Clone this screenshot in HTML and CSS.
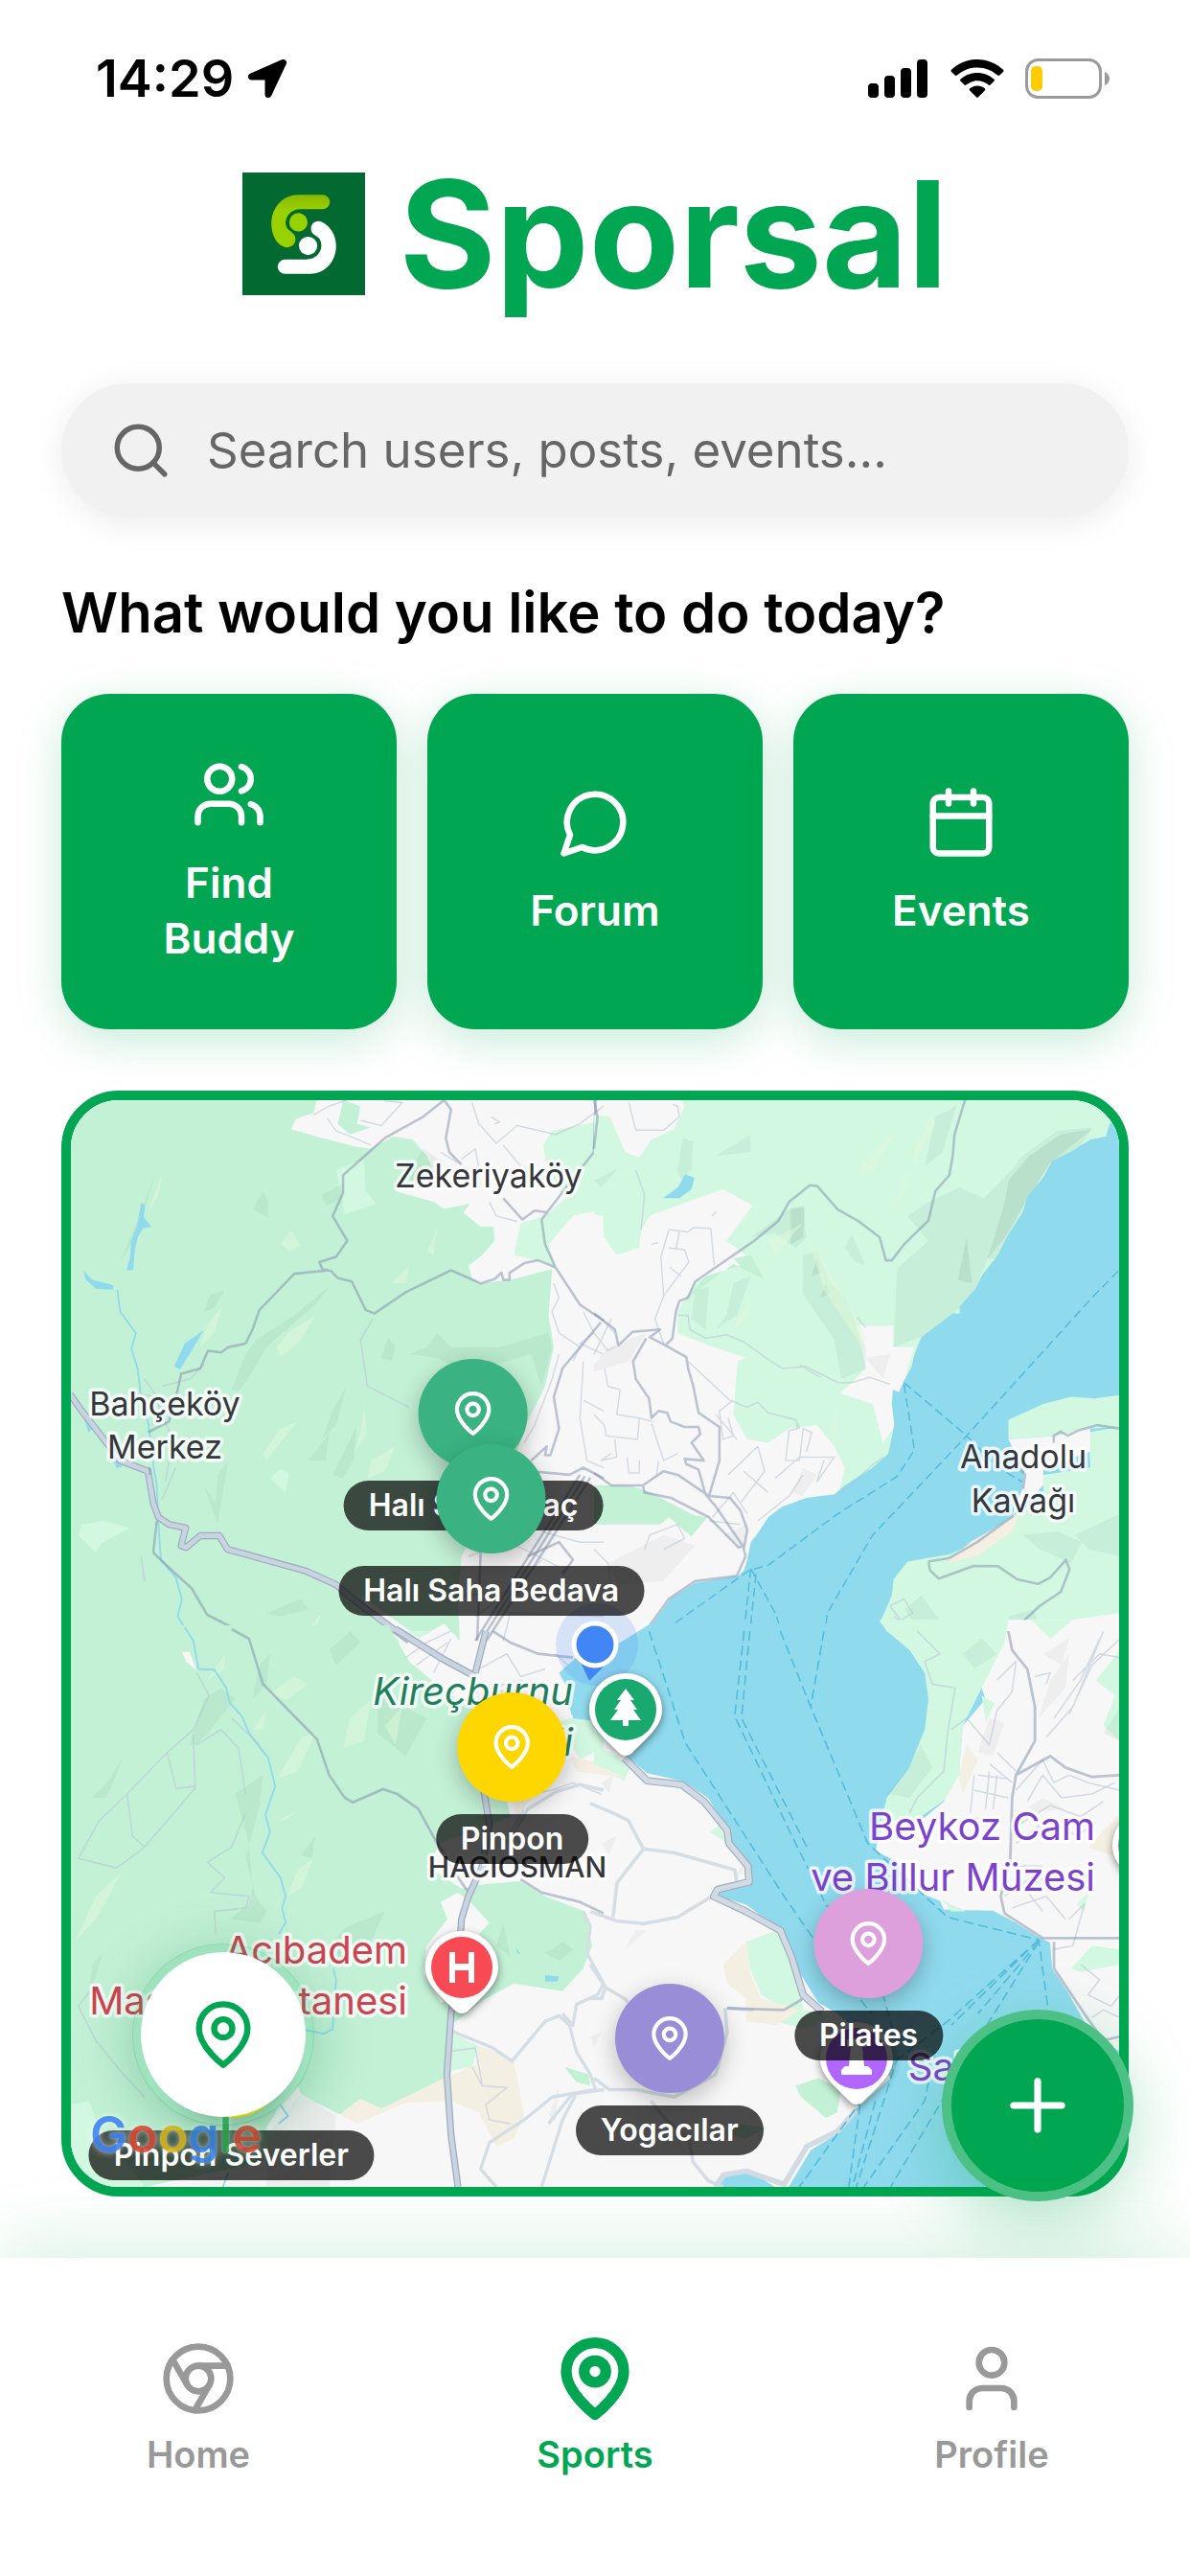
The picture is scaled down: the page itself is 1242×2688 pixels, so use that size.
FILE: index.html
```html
<!DOCTYPE html>
<html lang="en">
<head>
<meta charset="utf-8">
<meta name="viewport" content="width=device-width, initial-scale=1">
<title>Sporsal</title>
<link rel="stylesheet" href="styles.css">
</head>
<body>
<svg width="0" height="0" class="defs" aria-hidden="true">
  <symbol id="pin" viewBox="0 0 24 24"><path d="M20 10c0 6-8 12-8 12s-8-6-8-12a8 8 0 0 1 16 0Z"/><circle cx="12" cy="10" r="3"/></symbol>
</svg>

<div class="status">
  <div class="status-left">
    <span class="clock">14:29</span>
    <svg class="locate" viewBox="0 0 42 42" aria-hidden="true"><path d="M37.500 4.500 4.500 19H22V37.500Z" stroke="#000" stroke-width="7" stroke-linejoin="round"/></svg>
  </div>
  <div class="status-right">
    <svg class="signal" viewBox="0 0 64 40" aria-hidden="true"><rect x="0" y="25" width="11" height="15" rx="4"/><rect x="17" y="17" width="11" height="23" rx="4"/><rect x="34" y="9" width="11" height="31" rx="4"/><rect x="51" y="0" width="11" height="40" rx="4"/></svg>
    <svg class="wifi" viewBox="0 0 56 40" aria-hidden="true"><path d="M28 0C17.500 0 8 4.200 1 10.800c-.7.700-.7 1.500 0 2.200l3.700 3.600c.6.600 1.400.6 2.100 0C12.500 11.500 19.900 8.400 28 8.400s15.500 3.100 21.200 8.200c.7.600 1.500.6 2.100 0L55 13c.7-.7.7-1.500 0-2.200C48 4.200 38.500 0 28 0Zm0 14c-6.600 0-12.700 2.500-17.300 6.600-.8.700-.7 1.500-.1 2.200l3.800 3.700c.6.600 1.300.6 2 .1 3.100-2.700 7.200-4.300 11.600-4.300s8.500 1.600 11.600 4.300c.7.500 1.400.5 2-.1l3.800-3.700c.6-.7.7-1.500-.1-2.200C40.700 16.500 34.600 14 28 14Zm0 13.500c-2.900 0-5.600 1-7.700 2.800-.8.700-.7 1.500-.1 2.100l6.700 6.900c.7.700 1.500.7 2.200 0l6.700-6.900c.6-.6.700-1.400-.1-2.100-2.100-1.800-4.800-2.800-7.700-2.800Z"/></svg>
    <svg class="battery" viewBox="0 0 88 42" aria-hidden="true"><rect x="1.500" y="1.500" width="77" height="39" rx="12" fill="none" stroke="#9b9b9b" stroke-width="3"/><path d="M83 14v14c3-1 5-4 5-7s-2-6-5-7Z" fill="#9b9b9b"/><rect x="6" y="8" width="12" height="26" rx="5" fill="#fc0"/></svg>
  </div>
</div>

<main class="content">
  <header class="brand">
    <svg class="logo" viewBox="0 0 127 127" role="img" aria-label="Sporsal logo">
      <defs><linearGradient id="lime" x1="0" y1="0" x2="0" y2="1"><stop offset="0" stop-color="#8ab800"/><stop offset=".3" stop-color="#99d100"/></linearGradient></defs>
      <rect width="127" height="127" fill="#026a30"/>
      <path d="M58 23h25a7.500 7.500 0 0 1 0 15H60C48 38 42 50 46 57c2 4 9 5 9 12 0 6-6 10-12 8C35 74 30 64 30 53 30 36 42 23 58 23Z" fill="url(#lime)"/>
      <circle cx="58" cy="51.500" r="9.500" fill="#99d100"/>
      <path d="M70 105H44a7.500 7.500 0 0 1 0-15h22c13 0 19-12 14-21-2-4-9-4-9-11 0-6 6-9 11-7 9 4 15 14 15 25 0 17-12 29-27 29Z" fill="#fff"/>
      <circle cx="68" cy="76" r="9.500" fill="#fff"/>
    </svg>
    <h1 class="title">Sporsal</h1>
  </header>

  <label class="search">
    <svg class="search-icon" viewBox="0 0 24 24" aria-hidden="true"><circle cx="11" cy="11" r="8"/><path d="m21 21-4.300-4.300"/></svg>
    <input class="search-input" type="search" placeholder="Search users, posts, events..." aria-label="Search">
  </label>

  <h2 class="question">What would you like to do today?</h2>

  <div class="actions">
    <button class="action" type="button">
      <svg class="action-icon" viewBox="0 0 24 24" aria-hidden="true"><path d="M16 21v-2a4 4 0 0 0-4-4H6a4 4 0 0 0-4 4v2"/><circle cx="9" cy="7" r="4"/><path d="M22 21v-2a4 4 0 0 0-3-3.870M16 3.130a4 4 0 0 1 0 7.750"/></svg>
      <span>Find<br>Buddy</span>
    </button>
    <button class="action" type="button">
      <svg class="action-icon" viewBox="0 0 24 24" aria-hidden="true"><path d="M7.900 20A9 9 0 1 0 4 16.100L2 22Z"/></svg>
      <span>Forum</span>
    </button>
    <button class="action" type="button">
      <svg class="action-icon" viewBox="0 0 24 24" aria-hidden="true"><rect x="3" y="4" width="18" height="18" rx="2"/><path d="M16 2v4M8 2v4M3 10h18"/></svg>
      <span>Events</span>
    </button>
  </div>

  <section class="map-area" aria-label="Map">
    <div class="map">
      <svg class="terrain" viewBox="0 0 1094 1134" preserveAspectRatio="xMidYMid slice">
        <rect width="1094" height="1134" fill="#f7f7f7"/>

        <!-- north-west: Belgrad forest -->
        <g transform="translate(-14 -16) scale(.3635 .3699)">
          <path class="forest" d="M36 43H745L735 80 685 95 670 125 760 150 860 175 900 180 965 145 1020 155 1060 200 1080 240 970 300 1080 330 1110 350 1185 335 1165 360 1215 400H1252L1255 440 1220 480 1180 510 1190 545 1215 560 1300 550 1420 520 1410 650 1425 740 1400 850 1350 950 1310 1060 1160 1330 1150 1450 1155 1568 1110 1520 1040 1560 870 1440 900 1490 980 1568V1600H320L290 1530 315 1450 290 1400 240 1370 215 1300 220 1240 210 1190 235 1110 170 1060 140 1000 170 870 190 790 220 780 290 840 370 800 450 780 420 850 430 930 400 1000 460 1050 370 1080 330 1140 300 1180 290 1240 300 1400 330 1500 330 1600H36Z"/>
          <path class="forest" d="M820 43 870 60 860 110 900 120 840 140 805 110Z"/>
          <path class="meadow" d="M1568 100 1420 130 1395 170 1405 240 1460 320 1400 370 1330 390 1310 480 1400 500 1430 520 1410 450 1480 370 1568 350Z"/>
          <path class="meadow" d="M800 240 880 210 885 300 915 335 825 365ZM70 1240 130 1230 210 1250 130 1290 110 1320 60 1270ZM610 1110 640 1085 665 1095 655 1150Z"/>
          <path class="shade" d="M500 860 540 760 570 720 680 650 780 570 740 620 600 740 560 810 520 865ZM560 350 590 300 605 330 605 375ZM760 310 820 280 820 320 770 340ZM420 640 440 590 480 580 450 630ZM760 1000 790 920 830 850 800 960ZM790 1100 820 1040 860 960 870 860 850 1060 820 1110ZM930 770 950 710 970 740 960 780ZM1010 760 1060 740 1090 700 1130 740 1270 740 1340 720 1410 700 1420 740 1390 850 1360 760 1220 800 1130 790 1090 770ZM420 1130 455 1180 460 1100 490 1060 460 1240ZM600 1490 700 1450 720 1480 640 1500ZM240 360 280 250 265 300 230 420 180 500ZM720 1060 760 1010 780 980 770 1060ZM1050 180 1110 220 1060 290 1000 260Z"/>
          <path class="glow" d="M630 740 660 700 740 650 700 720 640 770ZM260 360 300 250 290 310ZM410 740 430 680 475 620 450 700ZM640 450 670 410 700 455 665 470ZM590 1040 640 970 690 950 640 1010 600 1060ZM900 1060 970 1020 940 1090 890 1110ZM1060 470 1080 430 1090 400 1080 480ZM960 560 1010 510 1000 560ZM880 910 870 980 850 1040 890 980ZM700 1550 760 1490 730 1560Z"/>
          <path class="lake" d="M240 333 252 340 248 375 270 400 245 405 230 430 222 470 217 523H198L208 490 212 440 228 400ZM75 525 100 550 160 565 160 578 110 575 80 548ZM335 795 365 730 420 692 385 750 352 802ZM75 938 102 965 90 982ZM160 1058 188 1075 170 1082Z"/>
          <path class="stream" d="M172 578 180 640 225 700 212 745 230 800 240 880 262 960 275 1070 285 1130 290 1240 297 1340 340 1390 357 1450 345 1500 390 1568"/>
          <path class="lane" d="M735 85 780 60 830 43M775 95 800 130 840 145 900 170M870 100 930 115 990 50 940 45M1190 50 1210 110 1260 165 1320 115 1430 140 1500 110 1568 60M1160 210 1200 180 1210 240M1100 190 1150 220M1280 170 1330 230M1240 330 1260 370 1320 385M1245 90 1270 105 1255 110M1425 560 1440 600 1420 640 1440 700 1500 740 1480 780M1510 640 1540 700 1500 730 1568 760M1440 760 1420 830 1370 960 1340 1010M1510 890 1568 920M1510 780 1500 940 1520 1060 1568 1080M250 830 300 900 270 960M300 850 380 830 420 790M220 870 280 880 330 1000 310 1120M240 1330 250 1400M340 1080 300 1170M1180 1330 1290 1290 1340 1310 1440 1360M1200 1500 1310 1420 1390 1340M1300 1450 1400 1440 1568 1420M1280 1568 1300 1490 1568 1500M905 660 870 720 890 850 1010 910M1170 1440 1290 1430M1390 1260 1500 1290 1568 1290"/>
          <path class="road" d="M1110 43 1050 90 940 150 820 255V305L790 370 832 440 800 485 752 500 760 520 785 525 805 545 845 555 885 635 910 645 1000 585 1130 523 1215 560 1255 548 1275 530 1280 550H1298V530L1340 503 1380 495 1430 515 1500 620 1568 665M780 523 680 533 580 635 560 690 540 730 490 740 470 755 432 750 410 800 355 815 345 860M1110 43 1130 70 1115 150 1125 190 1160 225M1545 43 1540 190 1460 290 1390 380 1400 450 1430 515M1280 320 1335 380 1370 355 1410 360M1560 670 1450 800 1425 880 1440 970 1415 1045 1400 1045 1405 1020 1360 1060M345 860 320 950 260 980M1360 1090 1470 1100 1510 1080 1568 1110M1215 1320 1205 1568M1350 1330 1440 1290 1480 1340 1450 1380M275 1320 340 1380 385 1420 430 1495 530 1545 560 1590"/>
          <path class="casing" d="M36 873 70 920 180 1060 260 1090 275 1180 290 1220 320 1240 368 1250 355 1300 370 1305 410 1272 465 1272 488 1310 715 1372 800 1410 860 1460 1010 1568"/>
          <path class="highway" d="M36 873 70 920 180 1060 260 1090 275 1180 290 1220 320 1240 368 1250 355 1300 370 1305 410 1272 465 1272 488 1310 715 1372 800 1410 860 1460 1010 1568"/>
          <path class="road" d="M265 1080V1100M285 1230 275 1320M1500 1100 1200 1568M1514 1104 1216 1568M1530 1108 1232 1568"/>
        </g>

        <!-- north-east: shore and strait -->
        <g transform="translate(546 -16) scale(.3635 .3699)">
          <path class="meadow" d="M0 85 45 90 90 190 130 205 165 155 230 125 260 60 250 43H1510V1000L700 1160 720 1080 690 1020 640 960 560 970 500 1010 440 1000 400 930 412 780 435 770 330 735 240 700 240 640 290 555 420 510 445 455 490 520 380 440 455 340 370 295 270 330 160 370 135 410 130 460 65 480 28 430 25 370 0 365Z"/>
          <path class="forest" d="M0 1130 100 1130 150 1145 200 1170 290 1215 325 1220 280 1275 215 1220 190 1240 0 1240ZM270 600 320 540 420 510 400 490 450 480 490 550 400 505Z"/>
          <path class="land" d="M755 680H858L860 740H920L880 870 860 860 865 960 830 1010 800 900 705 870 740 840 780 800Z"/>
          <path class="shade" d="M240 240 255 150 285 160 280 240 250 270ZM450 430 560 350 600 340 610 430 580 460 520 420ZM600 480 640 470 680 560 720 600 780 740 780 800 710 830 690 720 600 590ZM860 740 870 520 960 440 900 370 960 330 1050 290 1120 320 1200 240 1230 200 1330 130 1430 120 1400 170 1310 220 1240 330 1160 490 1130 490 1090 590 1050 630 940 710ZM290 580 330 570 320 690 280 660ZM380 650 400 560 450 540 410 650 350 690ZM980 90 1040 60 1000 190 950 230ZM720 460 740 420 780 510 750 500ZM350 200 450 140 450 190ZM0 270 70 235 20 290Z"/>
          <path class="dark-shade" d="M1130 490 1180 330 1190 270 1250 200 1340 140 1430 125 1310 220 1240 330 1180 430ZM565 350 605 345 600 430 565 450ZM625 540 640 490 650 530ZM1045 550 1070 430 1085 560ZM650 600 665 560 675 590Z"/>
          <path class="glow" d="M620 450 660 500 780 710 770 740 660 580ZM750 250 830 160 870 130 800 250ZM920 180 970 80 980 110 920 220ZM860 340 900 230 890 310ZM500 440 600 390 520 480ZM390 700 460 590 440 650ZM670 1000 700 900 700 980Z"/>
          <path class="hill" d="M0 790 40 740 150 700 100 780 0 810ZM40 1350 200 1270 290 1300 200 1400 70 1410ZM570 1150 600 1080 640 1100 600 1160ZM780 770 850 760 830 830ZM370 1270 440 1240 430 1310Z"/>
          <path class="sea" d="M1510 85 1480 110 1470 145 1425 155 1375 185 1315 215 1290 260 1245 315 1230 360 1185 430 1160 480 1115 535 1095 575 1050 625V645L1030 645 940 712 920 760 912 795 890 835 875 867 858 860 855 900 862 960 845 1040 800 1080 720 1130 690 1155 610 1165 540 1190 500 1220 470 1265 450 1290 440 1340 430 1370 415 1385 290 1405 220 1450 160 1530 90 1568 80 1610H1520V80Z"/>
          <path class="lake" d="M198 320 240 290 262 253 288 262 280 295 245 320Z"/>
          <path class="meadow" d="M1510 875 1440 885 1370 880 1290 900 1190 945V1000L1320 990 1420 970 1510 965ZM1510 965 1420 980 1425 1080 1290 1100V1170L1200 1215 1100 1290 1020 1325 900 1345 860 1395 855 1440 820 1520 860 1568 880 1610H1520Z"/>
          <path class="land" d="M1190 1000 1325 990 1425 965V1035L1290 1080V1130L1200 1215 1230 1140 1235 1090ZM1370 1510 1510 1490V1610H1340Z"/>
          <path class="shade" d="M1230 1270 1330 1260 1400 1290 1370 1350 1280 1310ZM1380 1270 1510 1210V1330L1420 1310ZM890 1480 940 1440 1000 1520 930 1530ZM1190 1500 1260 1480 1300 1568H1190Z"/>
          <path class="sand" d="M1010 1350 1080 1290 1220 1210 1200 1260 1100 1330Z"/>
          <path class="lane" d="M100 50 120 128 200 128 245 90 240 60 225 55M120 240 145 310 135 410M215 408 270 415 285 403 335 405 345 510M215 408 192 485 200 595 245 535 272 500 260 465 215 460M235 465 245 415M218 515 250 540M200 595 175 660 200 730M165 450 185 445M340 370 350 358M0 700 40 750 60 740M0 760 50 660M10 650 60 700M30 800 40 850 75 860 65 930 130 940 170 950M0 930 30 960 35 990 125 1000 130 940M60 1000 65 1050 20 1060 50 1040M95 1050 100 1095H130V1060M165 955 200 1060 240 1040M270 780 390 890 440 910 470 895 500 925 580 945 585 970 560 975 550 1060 590 1060 600 970 625 980 610 1035M240 650 270 650 275 690 320 715 380 705 430 725 500 775 540 800 610 795 700 840 740 840 790 825 850 845M590 790 650 825M755 655 780 685M400 890 360 920 370 1000 400 990 385 940M350 930 410 1000M385 1100 470 1020 490 1090 420 1180M430 1090 500 1150M520 1110 590 1050 690 1050 640 1120 660 1060M470 1230 560 1160 600 1100M145 1310 160 1270 240 1240 260 1280 200 1310M340 1220 400 1150 440 1210M330 1230 420 1240M0 1310 40 1350 50 1430M850 1470 890 1450 915 1490 880 1510ZM860 1500 930 1540 1000 1560M700 1160 790 1080 830 1050M1460 1560 1510 1520M580 945 590 970M185 1060 180 1100"/>
          <path class="road" d="M1065 43 1035 140 1030 200 1020 255 980 300 960 383 890 450 855 495H838L820 430 760 385 700 352 640 285 620 283 560 330 530 383 460 440 290 555 270 600 245 610 235 640 225 715 205 735 265 768 270 800 285 850 300 925 360 965V1060L330 1160M205 735 160 712 190 690 110 697 70 735 60 690 0 645M150 715 112 780 120 830 158 885 165 940 185 920 210 925 220 950 260 965H300L305 985 280 1010 315 1060 260 1055 265 1070 300 1085 320 1155M0 1095 50 1130 140 1130 200 1090 240 1100 330 1160 390 1165 420 1200 440 1255 430 1310 435 1330 410 1385 290 1400 215 1450 160 1525M140 1130 145 1150 220 1165 330 1220 415 1305 430 1300M320 1155 350 1190 430 1305M0 43 10 90 0 180M960 1345 1020 1335 1100 1290 1205 1215M960 1345 965 1370 990 1393 1090 1357 1160 1358 1215 1395 1275 1408 1310 1390 1355 1340 1365 1368 1340 1430 1280 1470 1230 1515 1200 1528 1185 1568M1320 1010 1320 990 1340 978 1360 990 1390 975 1445 960 1510 970M1220 1080 1238 1100 1232 1140"/>
          <path class="ferry" d="M1505 525 1430 600 1070 990 800 1270 670 1490 660 1568M890 840 1070 990 1160 1080 1230 1120M890 845 920 1030 870 1105 700 1210 500 1355 445 1370 190 1548 160 1540M450 1365 428 1568M465 1380 445 1568M450 1365 520 1490 548 1568"/>
        </g>

        <!-- south-west -->
        <g transform="translate(-14 554) scale(.3635 .3954)">
          <path class="forest" d="M36-15H320L370 80 400 105 390 80 350-15H950L1010 80 1100 150 1200 210 1290 440 1300 490 1100 560 1060 620 1160 680 1200 670 1330 660 1400 700 1515 740 1535 830 1510 890 1450 950 1310 930 1230 970 1130 1040V1180L930 1260 870 1235 810 1275 700 1225 690 1200 640 1250 600 1310 590 1400 250 1467H36Z"/>
          <path class="land" d="M1060 830 1120 760 1100 715 1150 690 1190 720 1240 770 1210 800 1250 860 1200 960 1100 980 1050 900Z"/>
          <path class="meadow" d="M1130 1060 1210 1095 1190 1150 1130 1160ZM36 1250 90 1240 120 1310 250 1467H100L36 1380Z"/>
          <path class="meadow" d="M1440 240 1568 200V360L1540 320 1500 340ZM960 0H1070L1040 15Z"/>
          <path class="sand" d="M810 1275 870 1235 930 1260 1110 1180 1200 1145 1210 1095 1310 1130 1340 1280 1310 1340 1260 1360 1210 1270 1130 1240 1000 1245 860 1300ZM1470 330 1568 350V380L1490 370ZM1320 490 1300 440 1360 440Z"/>
          <path class="forest" d="M1455 1150 1525 1170 1530 1200 1490 1190Z"/>
          <path class="shade" d="M380 300 420 180 470 150 510 180 440 260 400 300ZM495 760 550 720 560 680 550 560 510 430 590 380 580 460 540 600 570 700 600 740 580 770ZM100 440 150 390 190 330 140 440ZM780 50 840 0 870 30 800 90ZM920 160 1060 230 1000 330 920 270ZM700 590 740 540 730 600ZM760 850 830 780 940 740 900 820 800 870ZM100 880 90 970 130 850ZM560 180 580 90 610 60 600 140ZM1260 830 1280 770 1300 860ZM1400 850 1450 820 1480 840 1440 870Z"/>
          <path class="glow" d="M600 170 680 120 720 140 660 180ZM630 390 700 280 740 270 690 370ZM820 310 840 230 900 180 880 290ZM50 820 110 700 190 630 110 760ZM660 700 690 630 735 600 700 680ZM650 500 700 470 630 500ZM560 260 600 210 590 260ZM430 130 480 60 480 100ZM940 250 990 200 970 300Z"/>
          <path class="hill" d="M1410 1280 1440 1200 1430 1290ZM1530 1070 1560 1060 1540 1100ZM600 1330 700 1220 800 1280 780 1467H600Z"/>
          <path class="sea" d="M1568 50 1490 70 1440 110 1470 160 1480 230 1568 240Z"/>
          <path class="lake" d="M1400 908 1440 912 1435 925H1400ZM1315 835 1330 852 1320 850Z"/>
          <path class="stream" d="M365-10 390 25 405 100 450 102 485 150 495 190 530 225 550 270 605 335 625 410 597 485 610 530 588 585 640 650 655 700 645 730 655 770 635 800M792 890 800 920 790 1050 765 1063 700 1050M640 1250 662 1280 635 1300M490 1430 475 1467"/>
          <path class="lane" d="M400 110 435 170 390 260 315 320 200 430 120 500 60 600 170 625 250 570 395 415 390 270M200 430 215 540 250 570M315 320 340 415 395 410M400 300 470 260 520 310 540 430M500 230 580 300M540 480 500 570 430 610 480 650 440 690 550 700 540 730 450 740 455 800M110 930 60 990 110 1080 180 1160 250 1230M1000 70 1060 30 1130 0M1030 90 1120 30M1080 110 1130 20M1210 100 1290 60 1330 120 1400 100M1360 180 1240 150 1330 130 1440 180M1430 60 1500 120M1360 430 1420 420 1480 400 1560 430M1120 1110 1200 1100 1220 1200 1290 1205 1230 1250 1240 1290 1300 1300M1190 1150 1220 1200M1340 470 1300 530 1340 570"/>
          <path class="local" d="M1568 420 1500 405 1430 425 1350 470 1320 520 1290 560M1130 1055 1250 1100 1305 1135 1400 1030 1440 1015 1470 1040 1490 1110 1530 1170 1545 1210 1480 1220 1420 1230 1340 1290 1240 1350 1215 1420 1260 1467M1570 1210 1490 1220 1450 1290 1390 1467M1510 740 1530 780 1520 850 1568 930 1550 960 1490 985 1480 1040 1450 1010M1410 1300 1480 1220"/>
          <path class="road" d="M500-5 550 20 590 140 745 285 780 380 825 440 848 452 935 417 975 430 1035 468 1090 560 1120 600M1250 0 1300 30 1380 60 1480 70M1330 655 1390 690 1500 715 1568 745M1120 610 1180 690"/>
          <path class="casing" d="M970-5 1100 70 1200 120M1230 0 1200 110M1222 410 1240 510 1220 620 1180 700 1160 760 1150 900 1130 1010 1118 1170 1130 1330 1150 1467"/>
          <path class="highway" d="M970-5 1100 70 1200 120M1230 0 1200 110M1222 410 1240 510 1220 620 1180 700 1160 760 1150 900 1130 1010 1118 1170 1130 1330 1150 1467"/>
        </g>

        <!-- south-east -->
        <g transform="translate(546 554) scale(.3967 .3954)">
          <path class="sea" d="M150-20 70 30-40 60-80 110-60 220 60 240 85 330 140 375 230 395 300 440 350 520 370 580 412 640 405 660 330 682V700L400 722 480 780 515 830 540 900 590 980 640 1010 700 1060 780 1180 690 1260 650 1320 570 1370 510 1470H1390V-20Z"/>
          <path class="sea" d="M325 1467 350 1435 400 1427 450 1450 475 1467Z"/>
          <path class="meadow" d="M0 300 60 330 95 360 80 395 0 360ZM305 530 330 510 350 560ZM400 820 480 790 520 860 545 940 550 1000 520 1010 440 960 410 890ZM430 1020 560 1000 620 1015 560 1050Z"/>
          <path class="sand" d="M340 880 400 820 410 900 440 970 540 1000 480 1040 400 1030 400 970 350 930ZM0 350 90 390 0 375Z"/>
          <path class="forest" d="M530 1200 590 1180 650 1210 640 1270 610 1285 545 1230ZM370 1300 455 1310 400 1340 360 1330Z"/>
          <path class="meadow" d="M750-30 770 0 830 50 870 110 880 180 870 260 830 360 770 440 750 520 860 490 930 440 960 380 970 250 1020 150 1080 60 1090-30Z"/>
          <path class="land" d="M1384-30H1090L1080 30 1020 150 1030 180 970 250 960 380 920 450 860 500 760 500 740 580 800 610 830 680 910 712 920 735 1050 738 1110 770 1170 808 1200 822 1205 890 1245 950 1290 1030 1340 1080 1384 1110Z"/>
          <path class="sand" d="M960 380 980 300 1010 340 970 430ZM1300 570 1384 480V600Z"/>
          <path class="meadow" d="M1320 130 1384 50V290L1340 250 1370 170ZM1150-30H1260L1200 20ZM915 710 980 740 940 740ZM1255 890 1310 830 1384 840V880L1330 890 1280 900ZM1270 720 1300 690 1290 740ZM1020 170 1055 190 1030 240Z"/>
          <path class="hill" d="M1170 230 1200 130 1250 60 1240 150ZM1010 320 1040 230 1080 240 1050 330ZM20 560 60 540 40 590ZM370 650 400 600 390 640ZM80 840 110 790 140 790ZM1180 60 1250 20 1230 90ZM20 400 50 380 40 430ZM1120 480 1180 440 1240 470Z"/>
          <path class="shade" d="M770 430 830 360 860 300 890 360 830 440ZM970 60 1020 20 1060 60 1000 100ZM1340 270 1384 200V290Z"/>
          <path class="lane" d="M850 0 910 60 870 80 890 140 950 150 930 270 920 370 850 440 830 480M1060 130 1110 80 1100 160 1060 210 1040 300 980 230 940 260M1190 280 1260 200 1340 0M1210 230 1280 130 1330 20M1250 220 1310 90 1384 20M1060 320 1110 370M1040 350 1100 400M1010 380 1090 390M1000 420 1090 440M1000 380 990 480M1040 370 1030 470M1060 380 1050 470M1110 420 1180 340 1210 400 1250 380 1300 400 1384 420M1140 450 1180 380 1230 440 1310 430 1370 400M1120 510 1200 460 1280 490 1340 450M1110 560 1190 500 1270 540 1300 520M1080 700 1150 650 1210 660M1100 620 1180 620M1120 660 1180 740M1100 730 1190 700 1240 760M1250 760 1290 720 1260 830 1210 840M1280 880 1330 920 1300 960 1360 990 1384 960M1310 1020 1340 1000 1384 1020M1160 120 1200 110 1190 140M1384 70 1330 60 1260 130"/>
          <path class="local" d="M-10 455 50 480 90 500 130 575 210 585 370 630 375 660M130 575 60 665 50 755M-10 740 60 765 130 772 220 755 310 700 330 680M-10 880 30 940 80 970 90 980M30 940 20 970-10 970M345 995 350 1060 320 1170 210 1230 110 1210 40 1210 0 1180M350 995 420 1000M150 1240 190 1290 250 1340 260 1400 300 1450 340 1467"/>
          <path class="road" d="M350 995 500 1000 550 970M1090 0 1100 50 1140 100 1160 200 1160 290 1110 380 1100 440 1095 600 1070 700 1080 745 1180 810 1384 810M1110 380 1200 330 1240 360 1310 385 1384 380M1210 820V890L1290 1010 1340 1080 1384 1070"/>
          <path class="casing" d="M80 335 140 395 230 405 290 450 350 525 355 560 405 620 408 662 325 682 315 700 400 740 490 790 520 860 550 960 600 1005"/>
          <path class="coast" d="M80 335 140 395 230 405 290 450 350 525 355 560 405 620 408 662 325 682 315 700 400 740 490 790 520 860 550 960 600 1005M690 1265 640 1320 560 1360 500 1460 400 1425 340 1435 320 1467"/>
          <path class="ferry" d="M145 0 240 295 500 700 590 830 730 1010M395 0 370 225 530 560 620 740 760 960 800 1100M410 0 388 230 560 570M490 0 570 200 720 560 930 755 1170 815 1195 1000M605 0 570 200M1170 815 930 1030 760 1160 540 1467M1170 815 940 1040M1170 820 1040 1030 780 1467M1170 820 1010 1010M700 1250 670 1467M740 1240 680 1467M800 1120 690 1467M880 1190 870 1240 710 1467"/>
        </g>

        <g class="place">
          <text x="436" y="91">Zekeriyaköy</text>
          <text x="98" y="329">Bahçeköy</text><text x="98" y="374">Merkez</text>
          <text x="994" y="384">Anadolu</text><text x="994" y="430">Kavağı</text>
        </g>
        <text class="district" x="466" y="811">HACIOSMAN</text>
        <g class="poi park"><text x="524" y="631">Kireçburnu</text><text x="524" y="684">Sahili</text></g>
        <g class="poi hospital"><text x="351" y="901">Acıbadem</text><text x="351" y="954">Maslak Hastanesi</text></g>
        <g class="poi museum"><text x="1069" y="772">Beykoz Cam</text><text x="1069" y="825">ve Billur Müzesi</text><text x="978" y="1023">Sakıp</text></g>

        <!-- current position -->
        <circle cx="549" cy="568" r="43" fill="#4285f4" opacity=".18"/>
        <path d="M529 580 541 606 567 580Z" fill="#4285f4"/>
        <circle cx="547" cy="568" r="22" fill="#4285f4" stroke="#fff" stroke-width="5"/>

        <g class="poi-pin" transform="translate(579 636)">
          <path d="M0-38C21-38 38-21 38 0 38 16 27 25 7 45 3 49-3 49-7 45-27 25-38 16-38 0-38-21-21-38 0-38Z"/>
          <circle r="32" fill="#19a86d"/>
          <path d="M0-22 9-10H5L12 0H8L16 11H3V17H-3V11H-16L-8 0H-12L-5-10H-9Z"/>
        </g>
        <g class="poi-pin" transform="translate(408 905)">
          <path d="M0-38C21-38 38-21 38 0 38 16 27 25 7 45 3 49-3 49-7 45-27 25-38 16-38 0-38-21-21-38 0-38Z"/>
          <circle r="32" fill="#f84a55"/>
          <path d="M-13-16H-7V-4H7V-16H13V16H7V3H-7V16H-13Z"/>
        </g>
        <g class="poi-pin" transform="translate(820 1000)">
          <path d="M0-38C21-38 38-21 38 0 38 16 27 25 7 45 3 49-3 49-7 45-27 25-38 16-38 0-38-21-21-38 0-38Z"/>
          <circle r="32" fill="#b066ff"/>
          <path d="M-10-20H10V-12H6L8 8H12L16 12V17H-16V12L-12 8H-8L-6-12H-10Z"/>
        </g>
        <g class="poi-pin" transform="translate(1125 778)">
          <path d="M0-38C21-38 38-21 38 0 38 16 27 25 7 45 3 49-3 49-7 45-27 25-38 16-38 0-38-21-21-38 0-38Z"/>
          <circle r="32" fill="#b066ff"/>
        </g>
      </svg>

      <button class="marker pitch" type="button" style="left:38.4%;top:28.8%"><span class="dot"><svg class="dot-icon"><use href="#pin"/></svg></span><span class="tag">Halı Saha Maç</span></button>
      <button class="marker pitch" type="button" style="left:40.1%;top:36.7%"><span class="dot"><svg class="dot-icon"><use href="#pin"/></svg></span><span class="tag">Halı Saha Bedava</span></button>
      <button class="marker tennis" type="button" style="left:42.1%;top:59.5%"><span class="dot"><svg class="dot-icon"><use href="#pin"/></svg></span><span class="tag">Pinpon</span></button>
      <button class="marker tennis" type="button" style="left:15.3%;top:88.6%"><span class="dot"><svg class="dot-icon"><use href="#pin"/></svg></span><span class="tag">Pinpon Severler</span></button>
      <button class="marker yoga" type="button" style="left:57.1%;top:86.3%"><span class="dot"><svg class="dot-icon"><use href="#pin"/></svg></span><span class="tag">Yogacılar</span></button>
      <button class="marker pilates" type="button" style="left:76.1%;top:77.6%"><span class="dot"><svg class="dot-icon"><use href="#pin"/></svg></span><span class="tag">Pilates</span></button>

      <span class="google"><span class="g-blue">G</span><span class="g-red">o</span><span class="g-yellow">o</span><span class="g-blue">g</span><span class="g-green">l</span><span class="g-red">e</span></span>
    </div>
    <button class="locate-button" type="button" aria-label="Show my location"><svg class="locate-icon"><use href="#pin"/></svg></button>
    <button class="add-button" type="button" aria-label="Add event"><svg class="add-icon" viewBox="0 0 24 24"><path d="M5 12h14M12 5v14"/></svg></button>
  </section>
</main>

<nav class="tabs">
  <a class="tab" href="#home">
    <svg class="tab-icon" viewBox="0 0 24 24" aria-hidden="true"><circle cx="12" cy="12" r="10"/><circle cx="12" cy="12" r="4"/><path d="M21.170 8H12M3.950 6.060 8.540 14M10.880 21.940 15.460 14"/></svg>
    <span>Home</span>
  </a>
  <a class="tab active" href="#sports" aria-current="page">
    <svg class="tab-icon"><use href="#pin"/></svg>
    <span>Sports</span>
  </a>
  <a class="tab" href="#profile">
    <svg class="tab-icon" viewBox="0 0 24 24" aria-hidden="true"><circle cx="12" cy="7" r="4"/><path d="M19 21v-2a4 4 0 0 0-4-4H9a4 4 0 0 0-4 4v2"/></svg>
    <span>Profile</span>
  </a>
</nav>
</body>
</html>
```
FILE: styles.css
```css
* { box-sizing: border-box; }

body {
  margin: 0;
  min-height: 100vh;
  display: flex;
  flex-direction: column;
  background: #fff;
  color: #000;
  font-family: Inter, "Liberation Sans", sans-serif;
  overflow-x: hidden;
}

button { font: inherit; border: 0; padding: 0; margin: 0; background: none; cursor: pointer; }
svg { display: block; flex: none; }
.defs { position: absolute; }

/* status bar */
.status {
  display: flex;
  justify-content: space-between;
  align-items: center;
  height: 164px;
  padding: 0 84px 0 100px;
}
.status-left { display: flex; align-items: center; gap: 14px; }
.status-right { display: flex; align-items: center; gap: 22px; }
.clock { font-size: 54px; font-weight: 600; line-height: 64px; }
.locate { width: 42px; height: 42px; }
.signal { width: 64px; height: 40px; }
.wifi { width: 56px; height: 40px; }
.battery { width: 88px; height: 42px; }

.content { padding: 16px 64px 64px; }

/* brand */
.brand { display: flex; justify-content: center; align-items: center; gap: 36px; }
.logo { width: 128px; height: 128px; }
.title { margin: 0; font-size: 154px; font-weight: 700; line-height: 128px; color: #00a651; }

/* search */
.search {
  display: flex;
  align-items: center;
  gap: 36px;
  height: 140px;
  margin-top: 92px;
  padding: 0 50px;
  border-radius: 70px;
  background: #f1f1f1;
  box-shadow: 0 6px 36px rgba(0, 0, 0, .08);
}
.search-icon { width: 66px; height: 66px; fill: none; stroke: #666; stroke-width: 2; stroke-linecap: round; }
.search-input {
  flex: 1;
  min-width: 0;
  border: 0;
  padding: 0;
  outline: 0;
  background: none;
  appearance: none;
  font: 400 51px/60px Inter, "Liberation Sans", sans-serif;
}
.search-input::placeholder { color: #666; opacity: 1; }

.question { margin: 64px 0 50px; font-size: 58px; font-weight: 600; line-height: 70px; }

/* quick actions */
.actions { display: grid; grid-template-columns: repeat(3, 1fr); gap: 32px; }
.action {
  display: flex;
  flex-direction: column;
  align-items: center;
  justify-content: center;
  gap: 24px;
  aspect-ratio: 1;
  border-radius: 50px;
  background: #00a651;
  box-shadow: 0 12px 48px rgba(0, 166, 81, .22);
  color: #fff;
  font-size: 44px;
  font-weight: 600;
  line-height: 58px;
}
.action-icon { width: 78px; height: 78px; fill: none; stroke: #fff; stroke-width: 2; stroke-linecap: round; stroke-linejoin: round; }

/* map */
.map-area { position: relative; margin-top: 64px; }
.map {
  position: relative;
  overflow: hidden;
  aspect-ratio: 1114 / 1154;
  border: 10px solid #00a651;
  border-radius: 60px;
}
.terrain { width: 100%; height: 100%; }
.terrain path { stroke-linejoin: round; }
.forest { fill: #c3f1d6; }
.meadow { fill: #d3f8e2; }
.land { fill: #f7f7f7; }
.sand { fill: #f4efe3; }
.hill { fill: #eee; }
.sea, .lake { fill: #90daee; }
.shade { fill: #5f9f7d; opacity: .1; }
.dark-shade { fill: #5f8f78; opacity: .14; }
.glow { fill: #e2f8da; opacity: .5; }
.lane, .local, .road, .casing, .highway, .coast, .stream, .ferry { fill: none; }
.lane { stroke: #b8c3d4; stroke-width: 4; opacity: .55; }
.local { stroke: #d5dde5; stroke-width: 9; }
.road { stroke: #7f8dab; stroke-width: 7; opacity: .5; }
.casing { stroke: #a0adbf; stroke-width: 20; }
.highway { stroke: #c9d4e1; stroke-width: 13; }
.coast { stroke: #d2dbe4; stroke-width: 14; }
.stream { stroke: #90daee; stroke-width: 5; }
.ferry { stroke: #52bbd9; stroke-width: 4; stroke-dasharray: 26 13; }

.place, .district, .poi { paint-order: stroke; stroke: #fff; stroke-opacity: .8; stroke-width: 7px; stroke-linejoin: round; }
.place, .district { text-anchor: middle; fill: #35373c; font-size: 34px; font-weight: 400; }
.district { font-size: 30px; font-weight: 500; }
.poi { text-anchor: end; font-size: 40px; }
.park { fill: #1f805b; font-style: italic; }
.hospital { fill: #cd4450; }
.museum { fill: #7b43cc; }
.poi-pin { fill: #fff; filter: drop-shadow(0 3px 4px rgba(0, 0, 0, .45)); }

.marker {
  position: absolute;
  display: flex;
  flex-direction: column;
  align-items: center;
  gap: 13px;
  transform: translate(-50%, -57px);
}
.dot {
  display: grid;
  place-items: center;
  width: 114px;
  height: 114px;
  border-radius: 50%;
  box-shadow: 0 8px 24px rgba(0, 0, 0, .25);
}
.dot-icon { width: 50px; height: 50px; fill: none; stroke: #fff; stroke-width: 2; stroke-linejoin: round; }
.pitch .dot { background: #3ab281; }
.tennis .dot { background: #ffd700; }
.yoga .dot { background: #9a8dd8; }
.pilates .dot { background: #dda0dd; }
.tag {
  padding: 0 26px;
  border-radius: 26px;
  background: rgba(0, 0, 0, .7);
  color: #fff;
  font-size: 32px;
  font-weight: 600;
  line-height: 52px;
  white-space: nowrap;
}

.google {
  position: absolute;
  left: 20px;
  bottom: 22px;
  font-size: 52px;
  font-weight: 600;
  line-height: 64px;
  opacity: .9;
  text-shadow: 0 0 3px rgba(255, 255, 255, .5), 0 0 8px rgba(255, 255, 255, .6);
}
.g-blue { color: #4285f4; }
.g-red { color: #e04a36; }
.g-yellow { color: #e6bb1d; }
.g-green { color: #34a853; }

.locate-button, .add-button { position: absolute; display: grid; place-items: center; border-radius: 50%; }
.locate-button {
  left: 74px;
  bottom: 74px;
  width: 190px;
  height: 190px;
  border: 9px solid rgba(0, 166, 81, .18);
  background: #fff;
  background-clip: padding-box;
  box-shadow: 0 12px 60px rgba(0, 120, 60, .3);
}
.locate-icon { width: 76px; height: 76px; fill: none; stroke: #00a651; stroke-width: 2; stroke-linejoin: round; }
.add-button {
  right: -5px;
  bottom: -5px;
  width: 200px;
  height: 200px;
  border: 10px solid #4dc185;
  background: #00a651;
  box-shadow: 0 24px 72px rgba(0, 166, 81, .3);
}
.add-icon { width: 86px; height: 86px; fill: none; stroke: #fff; stroke-width: 2; stroke-linecap: round; }

/* tab bar */
.tabs {
  position: relative;
  flex: 1;
  display: grid;
  grid-template-columns: repeat(3, 1fr);
  align-items: start;
  padding: 80px 0 90px;
  background: #fff;
  box-shadow: 0 -12px 72px rgba(0, 166, 81, .16);
}
.tab {
  display: flex;
  flex-direction: column;
  align-items: center;
  gap: 10px;
  color: #999;
  font-size: 38px;
  font-weight: 600;
  line-height: 46px;
  text-decoration: none;
}
.tab-icon { width: 80px; height: 80px; margin: 6px 0; fill: none; stroke: currentColor; stroke-width: 2; stroke-linecap: round; stroke-linejoin: round; }
.active { color: #00a651; }
.active .tab-icon { width: 90px; height: 90px; margin: 1px 0; stroke-width: 3; }
```
